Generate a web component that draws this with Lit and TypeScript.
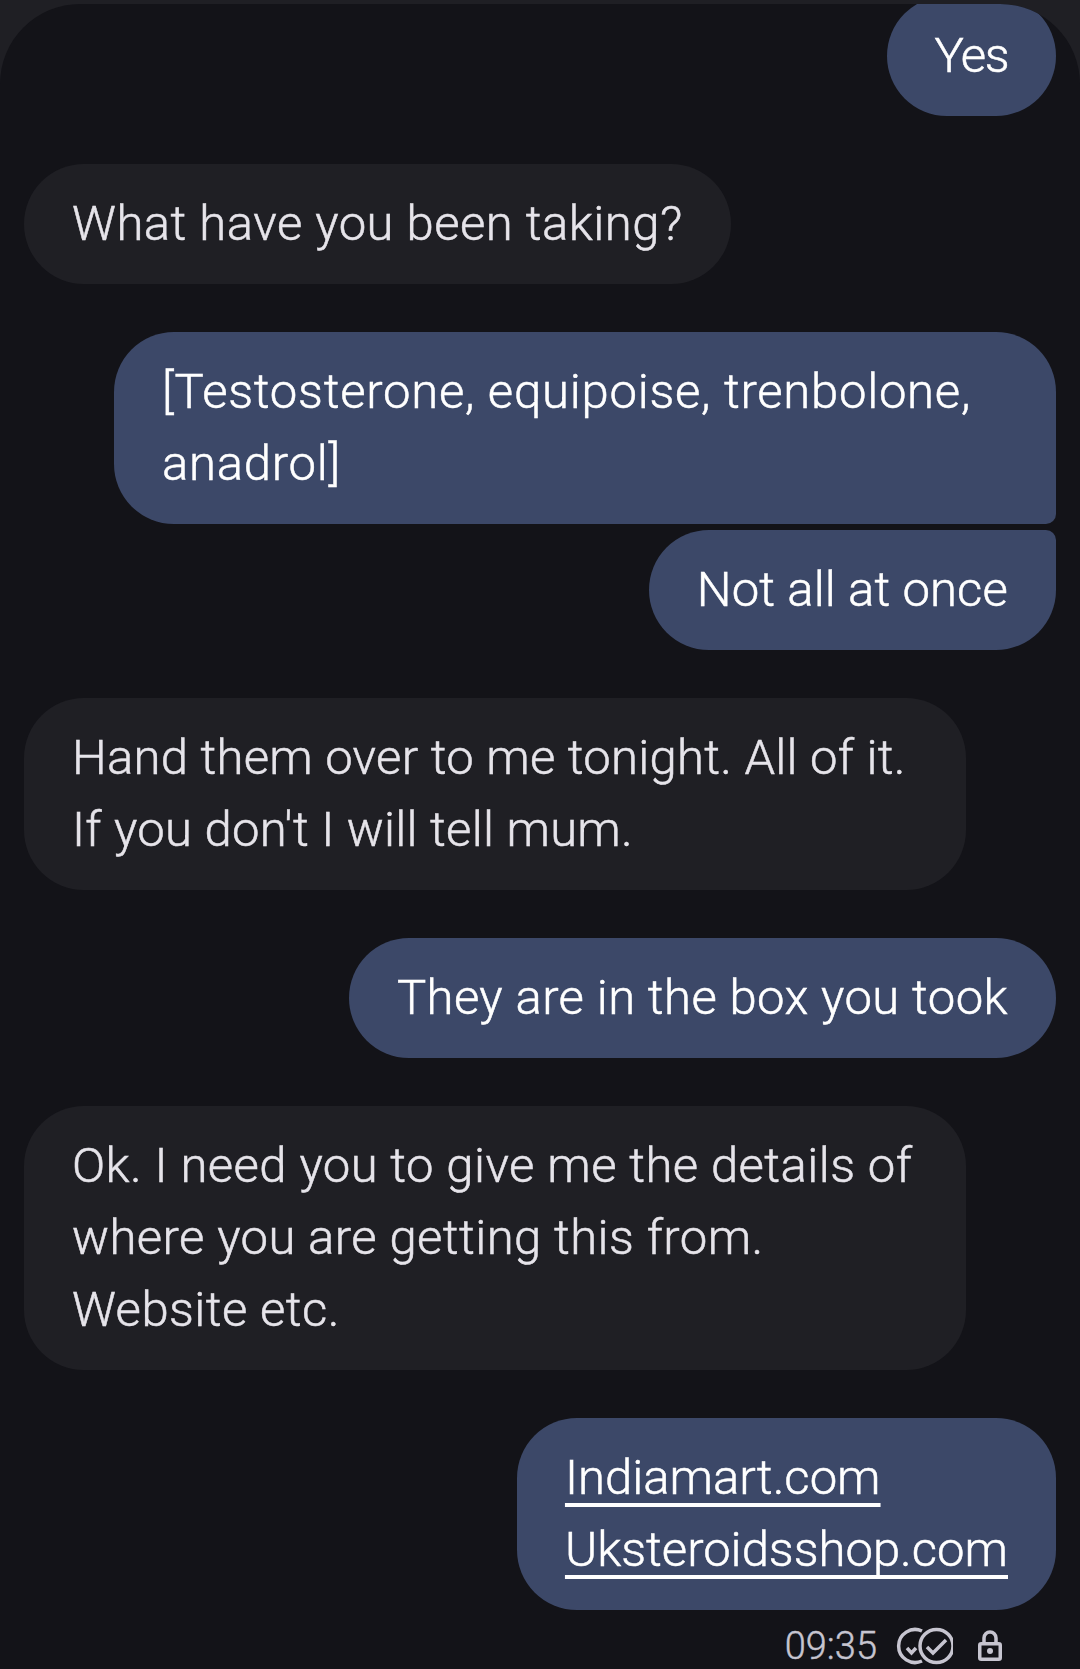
import { LitElement, html, css } from 'lit';
import { customElement } from 'lit/decorators.js';
import { styleMap } from 'lit/directives/style-map.js';

// track = letter-spacing in px, per message, Roboto runs a bit off the original font
type Msg = { out: boolean; text: string; track: number; cls?: string };

const messages: Msg[] = [
  { out: true, text: 'Yes', track: -1.5, cls: 'first' },
  { out: false, text: 'What have you been taking?', track: 0.5 },
  { out: true, text: '[Testosterone, equipoise, trenbolone, anadrol]', track: 0.75, cls: 'group-top' },
  { out: true, text: 'Not all at once', track: 0.14, cls: 'group-bottom' },
  { out: false, text: "Hand them over to me tonight. All of it. If you don't I will tell mum.", track: 0.27 },
  { out: true, text: 'They are in the box you took', track: 0.42 },
  { out: false, text: 'Ok. I need you to give me the details of where you are getting this from.\nWebsite etc.', track: 0.43 },
  { out: true, text: 'Indiamart.com\nUksteroidsshop.com', track: 0, cls: 'links' },
];

@customElement('app-root')
export class AppRoot extends LitElement {
  static styles = css`
    :host {
      display: block;
      width: 1080px;
      height: 1669px;
      background: #1f1f24;
      font-family: Roboto, "Noto Sans", sans-serif;
      overflow: hidden;
    }

    .panel {
      margin-top: 4px;
      height: 1665px;
      background: #131318;
      border-radius: 80px 80px 0 0;
      overflow: hidden;
      padding: 0 24px;
      box-sizing: border-box;
      display: flex;
      flex-direction: column;
    }

    .row {
      display: flex;
      margin-top: 48px;
    }

    .row.out {
      justify-content: flex-end;
    }

    .row.first {
      margin-top: -8px;
    }

    .row.group-bottom {
      margin-top: 6px;
    }

    .bubble {
      max-width: 942px;
      box-sizing: border-box;
      padding: 24px 48px;
      border-radius: 60px;
      font-size: 49px;
      font-weight: 300;
      -webkit-text-stroke: 0.5px currentColor;
      line-height: 72px;
      white-space: pre-line;
      background: #1f1f24;
      color: #e6e4ea;
    }

    .out .bubble {
      background: #3c4868;
      color: #fff;
    }

    .group-top .bubble {
      border-bottom-right-radius: 10px;
    }

    .group-bottom .bubble {
      border-top-right-radius: 10px;
    }

    .links .bubble {
      text-decoration: underline;
      text-decoration-thickness: 4px;
      text-underline-offset: 9px;
      text-decoration-skip-ink: none;
    }

    .meta {
      display: flex;
      justify-content: flex-end;
      align-items: center;
      margin-top: 16px;
      padding-right: 51px;
      color: #c7c5d0;
      font-size: 38px;
      font-weight: 300;
      -webkit-text-stroke: 0.4px currentColor;
      line-height: 40px;
    }

    .time {
      margin-right: 16px;
    }

    .checks {
      width: 60px;
      height: 40px;
      margin-right: 22px;
    }

    .lock {
      width: 30px;
      height: 40px;
    }

    svg {
      display: block;
      fill: none;
      stroke: #c7c5d0;
      stroke-width: 3.5;
    }
  `;

  render() {
    return html`
      <div class="panel">
        ${messages.map(
          (m) => html`
            <div class="row ${m.out ? 'out' : ''} ${m.cls ?? ''}">
              <div class="bubble" style=${styleMap({ letterSpacing: `${m.track}px` })}>${m.text}</div>
            </div>
          `,
        )}
        <div class="meta">
          <span class="time">09:35</span>
          <svg class="checks" viewBox="0 0 60 40">
            <path d="M29 5A16.5 16.5 0 1 0 29 35" />
            <path d="M14 22l4.5 5 4.5-5" />
            <circle cx="43.5" cy="20" r="16.5" />
            <path d="M34 21l6 6 13-13" />
          </svg>
          <svg class="lock" viewBox="0 0 30 40">
            <rect x="4.75" y="17.75" width="20.5" height="15.5" rx="1.5" />
            <path d="M9 17.75V12a6 6 0 0 1 12 0v5.75" />
            <circle cx="15" cy="25" r="3" fill="#c7c5d0" stroke="none" />
          </svg>
        </div>
      </div>
    `;
  }
}
